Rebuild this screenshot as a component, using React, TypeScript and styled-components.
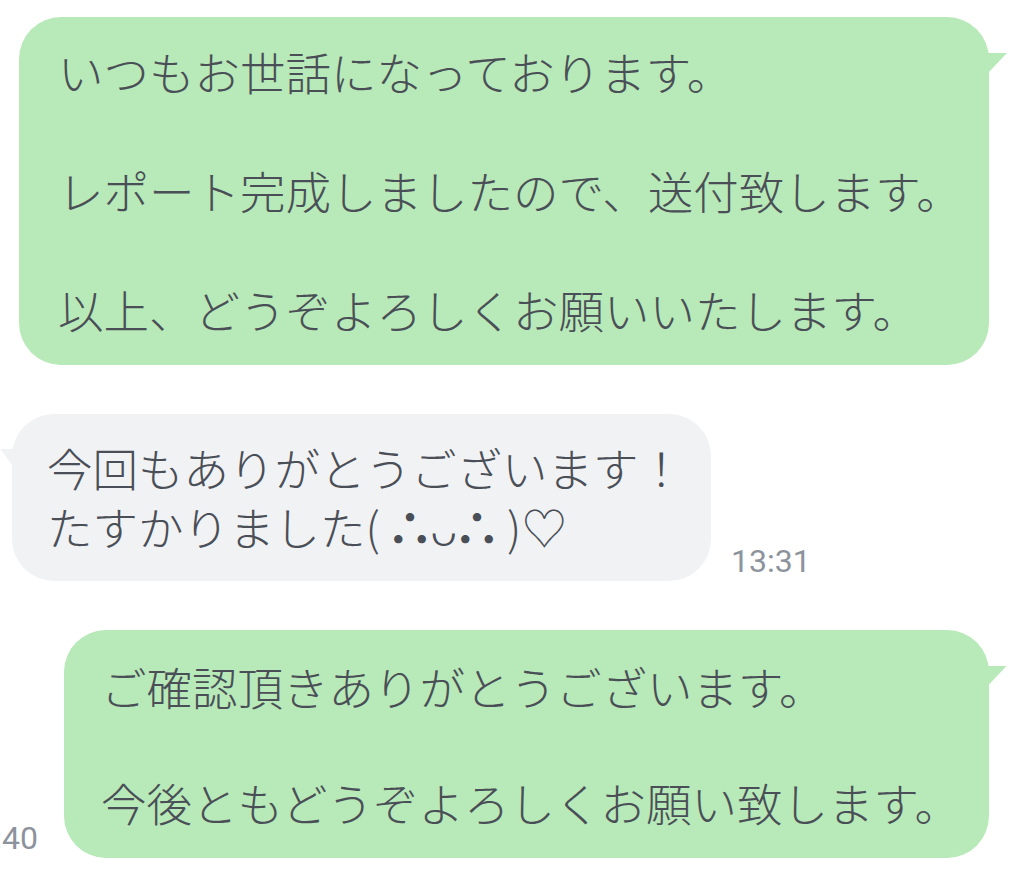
import React from 'react'
import styled, { createGlobalStyle } from 'styled-components'

type Message = {
    id: number
    out: boolean
    body: React.ReactNode
    time?: string
    width: number
    indent: number
    leading: number
    pad: number
}

const GlobalStyle = createGlobalStyle`
    html, body {
        margin: 0;
        padding: 0;
        background: #ffffff;
        overflow: hidden;
    }

    body {
        font-family: "Noto Sans CJK JP", "Noto Sans", sans-serif;
    }
`

const Thread = styled.div`
    display: flex;
    flex-direction: column;
    gap: 49px;
    padding-top: 17px;
    width: 1013px;
`

const Row = styled.div<{ $out: boolean }>`
    display: flex;
    align-items: flex-end;
    justify-content: ${p => (p.$out ? 'flex-end' : 'flex-start')};
    gap: ${p => (p.$out ? '26px' : '20px')};
    padding: ${p => (p.$out ? '0 24px 0 0' : '0 0 0 12px')};
`

const Bubble = styled.div<{ $out: boolean; $width: number; $indent: number; $leading: number; $pad: number }>`
    position: relative;
    flex-shrink: 0;
    box-sizing: border-box;
    width: ${p => p.$width}px;
    padding: ${p => p.$pad}px 8px ${p => p.$pad}px ${p => p.$indent}px;
    border-radius: 42px;
    background: ${p => (p.$out ? '#b8e9b8' : '#f1f2f4')};
    color: #4a4f57;
    font-size: 45.5px;
    font-weight: 300;
    line-height: ${p => p.$leading}px;
    white-space: pre;

    &::after {
        content: '';
        position: absolute;
        top: ${p => (p.$out ? '36px' : '35px')};
        ${p => (p.$out ? 'right: -18px;' : 'left: -12px;')}
        width: ${p => (p.$out ? '22px' : '16px')};
        height: 19px;
        background: inherit;
        clip-path: ${p => (p.$out
            ? 'polygon(0 0, 100% 0, 18% 100%, 0 100%)'
            : 'polygon(0 0, 100% 0, 100% 100%, 88% 100%)')};
    }
`

// kaomoji eyes: heavier dots, slightly pulled in
const Eye = styled.span`
    margin: 0 -4px;
    font-size: 48px;
    font-weight: 700;
    line-height: 0;
`

const Time = styled.span`
    flex-shrink: 0;
    margin-bottom: 4px;
    font-family: Roboto, "Liberation Sans", sans-serif;
    font-size: 32px;
    line-height: 1;
    color: #8d939c;
`

const messages: Message[] = [
    {
        id: 1,
        out: true,
        body: 'いつもお世話になっております。\n\nレポート完成しましたので、送付致します。\n\n以上、どうぞよろしくお願いいたします。',
        width: 970,
        indent: 39,
        leading: 59.5,
        pad: 25,
    },
    {
        id: 2,
        out: false,
        body: (
            <>
                {'今回もありがとうございます！\nたすかりました( '}
                <Eye>∴</Eye>
                {'ᴗ'}
                <Eye>∴</Eye>
                {' )♡'}
            </>
        ),
        time: '13:31',
        width: 699,
        indent: 35,
        leading: 59,
        pad: 24.5,
    },
    {
        id: 3,
        out: true,
        body: 'ご確認頂きありがとうございます。\n\n今後ともどうぞよろしくお願い致します。',
        time: '13:40',
        width: 925,
        indent: 37,
        leading: 58,
        pad: 27,
    },
]

const App: React.FC = () => {
    return (
        <>
            <GlobalStyle />
            <Thread>
                {messages.map(m => (
                    <Row key={m.id} $out={m.out}>
                        {m.out && m.time && <Time>{m.time}</Time>}
                        <Bubble $out={m.out} $width={m.width} $indent={m.indent} $leading={m.leading} $pad={m.pad}>
                            {m.body}
                        </Bubble>
                        {!m.out && m.time && <Time>{m.time}</Time>}
                    </Row>
                ))}
            </Thread>
        </>
    )
}

export default App
